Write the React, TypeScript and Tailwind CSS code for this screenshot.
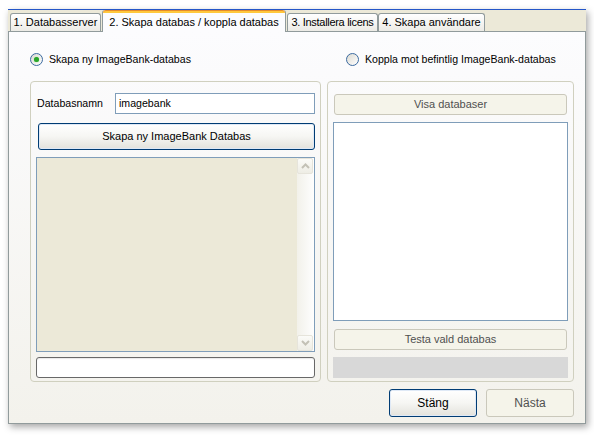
import React from 'react';

const font = { fontFamily: '"Liberation Sans", Arial, sans-serif' };

const Radio: React.FC<{ checked?: boolean; label: string }> = ({ checked, label }) => (
  <div className="flex items-center gap-[6px]">
    <span className="flex h-[13px] w-[13px] items-center justify-center rounded-full border border-[#3b6aa0] bg-linear-to-br from-[#dcdad2] to-white">
      {checked && (
        <span className="h-[5px] w-[5px] rounded-full bg-[#2aa52a] shadow-[0_0_1px_#5fd35f]" />
      )}
    </span>
    <span className="text-[10.6px] leading-[13px] text-black">{label}</span>
  </div>
);

const XpButton: React.FC<{ label: string; disabled?: boolean; className?: string }> = ({
  label,
  disabled,
  className,
}) =>
  disabled ? (
    <div
      className={`flex items-center justify-center rounded-[3px] border border-[#cac8bb] bg-[#f5f4ea] text-[11px] text-[#505050] ${className ?? ''}`}
    >
      {label}
    </div>
  ) : (
    <div
      className={`flex items-center justify-center rounded-[3px] border border-[#003c74] bg-linear-to-b from-white via-[#f6f6f3] to-[#e3e2dc] text-[11px] text-black shadow-[inset_0_0_0_1px_#dfe9f6] ${className ?? ''}`}
    >
      {label}
    </div>
  );

const ScrollArrow: React.FC<{ dir: 'up' | 'down' }> = ({ dir }) => (
  <div className="flex h-[16px] w-[16px] items-center justify-center rounded-[2px] border border-[#e6e4db] bg-linear-to-b from-[#fbfbf8] to-[#eeede5]">
    <svg width="9" height="6" viewBox="0 0 9 6">
      <path
        d={dir === 'up' ? 'M1 5 L4.5 1.5 L8 5' : 'M1 1 L4.5 4.5 L8 1'}
        fill="none"
        stroke="#c3c1b6"
        strokeWidth="2"
      />
    </svg>
  </div>
);

const tabs = [
  { label: '1. Databasserver', w: 'w-[91px]' },
  { label: '2. Skapa databas / koppla databas', w: 'w-[184px]', active: true },
  { label: '3. Installera licens', w: 'w-[91px] tracking-[-0.3px]' },
  { label: '4. Skapa användare', w: 'w-[107px]' },
];

export default function App() {
  return (
    <div className="h-[436px] w-[594px] overflow-hidden bg-white pl-[8px] pt-[9px]" style={font}>
      <div className="flex h-[415px] w-[578px] flex-col border-t border-[#2456c8] bg-[#ece9d8] shadow-[2px_3px_7px_rgba(0,0,0,0.35)]">
        {/* tab strip */}
        <div className="relative z-10 flex h-[21px] items-end pl-[2px]">
          {tabs.map((t) =>
            t.active ? (
              <div
                key={t.label}
                className={`-mb-[1px] ml-[1px] mr-[1px] flex h-[22px] flex-col rounded-t-[3px] border-x border-[#919b9c] bg-[#fcfcfe] ${t.w}`}
              >
                <div className="h-[3px] rounded-t-[3px] border-t border-[#e68b2c] bg-[#ffc83c]" />
                <div className="flex flex-1 items-center justify-center whitespace-nowrap text-[11px] text-black">
                  {t.label}
                </div>
              </div>
            ) : (
              <div
                key={t.label}
                className={`flex h-[18px] items-center justify-center whitespace-nowrap rounded-t-[3px] border border-b-0 border-[#919b9c] bg-linear-to-b from-white to-[#ecebe6] text-[11px] text-black ${t.w}`}
              >
                {t.label}
              </div>
            ),
          )}
        </div>
        {/* tab page */}
        <div className="flex flex-1 flex-col border border-[#919b9c] bg-linear-to-b from-[#fcfcfe] to-[#f3f2ec] pl-[21px] pr-[11px]">
          <div className="mt-[21px] grid grid-cols-[291px_247px] gap-x-[6px]">
            <Radio checked label="Skapa ny ImageBank-databas" />
            <div className="pl-[19px]">
              <Radio label="Koppla mot befintlig ImageBank-databas" />
            </div>
          </div>
          <div className="mt-[15px] grid h-[301px] grid-cols-[291px_247px] gap-x-[6px]">
            {/* left group */}
            <div className="flex flex-col rounded-[4px] border border-[#d0d0bf] px-[5px] pt-[11px]">
              <div className="flex h-[21px] items-center">
                <span className="w-[79px] pl-[1px] text-[10.6px] text-black">Databasnamn</span>
                <div className="flex h-[21px] flex-1 items-center border border-[#7f9db9] bg-white pl-[3px] text-[10.6px] text-black">
                  imagebank
                </div>
              </div>
              <XpButton label="Skapa ny ImageBank Databas" className="ml-[2px] mt-[9px] h-[27px]" />
              <div className="mt-[7px] flex h-[195px] border border-[#7f9db9] bg-[#ece9d8]">
                <div className="flex-1" />
                <div className="flex w-[17px] flex-col justify-between bg-linear-to-r from-[#f2f1ea] to-[#fefefe]">
                  <ScrollArrow dir="up" />
                  <ScrollArrow dir="down" />
                </div>
              </div>
              <div className="mt-[5px] h-[21px] rounded-[3px] border border-[#686868] bg-white shadow-[inset_0_1px_1px_#e8e8e8]" />
            </div>
            {/* right group */}
            <div className="flex flex-col rounded-[4px] border border-[#d0d0bf] px-[5px] pt-[12px]">
              <XpButton disabled label="Visa databaser" className="mx-[1px] h-[21px]" />
              <div className="mt-[7px] h-[199px] border border-[#7f9db9] bg-white" />
              <XpButton disabled label="Testa vald databas" className="mx-[1px] mt-[8px] h-[21px]" />
              <div className="mt-[7px] h-[21px] bg-[#d8d8d8]" />
            </div>
          </div>
          <div className="mt-[7px] flex justify-end gap-[9px]">
            <XpButton label="Stäng" className="h-[28px] w-[88px] text-[12px]" />
            <XpButton disabled label="Nästa" className="h-[28px] w-[88px] text-[12px]" />
          </div>
        </div>
      </div>
    </div>
  );
}
